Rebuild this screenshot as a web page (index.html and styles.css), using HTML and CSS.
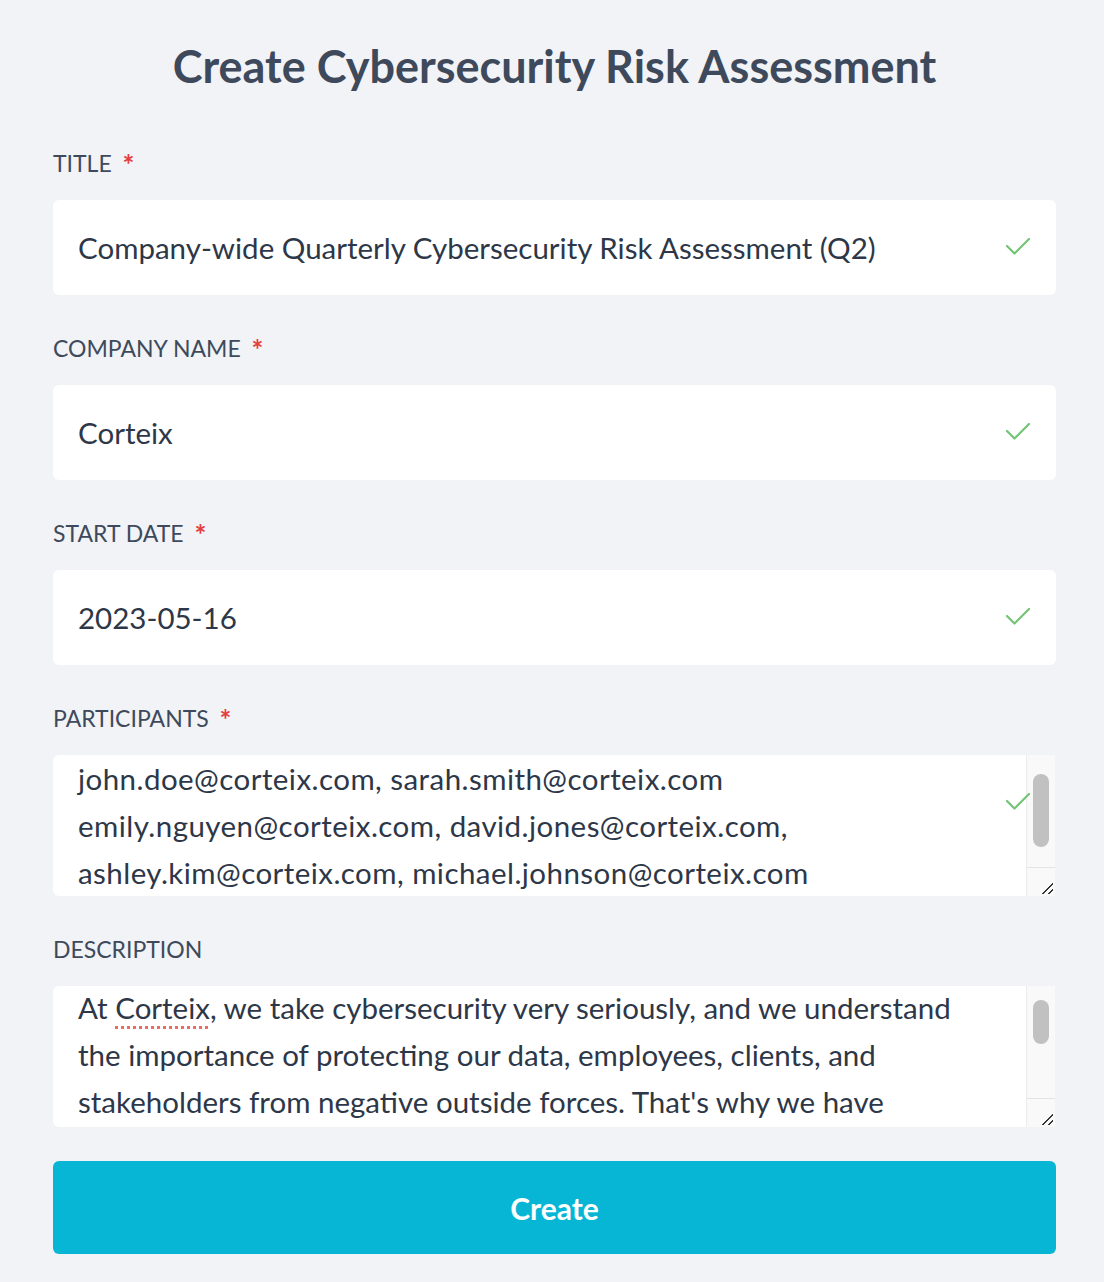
FILE: index.html
```html
<!DOCTYPE html>
<html lang="en">
<head>
  <meta charset="UTF-8">
  <title>Create Cybersecurity Risk Assessment</title>
  <meta name="viewport" content="width=device-width, initial-scale=1.0">
  <link rel="stylesheet" href="styles.css">
</head>
<body>
  <main class="page">
    <h1 class="page-title">Create Cybersecurity Risk Assessment</h1>

    <form class="form">
      <div class="field">
        <label class="field-label" for="title">Title <span class="req">*</span></label>
        <div class="control">
          <input class="input" id="title" type="text" value="Company-wide Quarterly Cybersecurity Risk Assessment (Q2)">
          <svg class="check" viewBox="0 0 24 17"><polyline points="1,8 8.5,15.5 23,1"/></svg>
        </div>
      </div>

      <div class="field">
        <label class="field-label" for="company">Company name <span class="req">*</span></label>
        <div class="control">
          <input class="input" id="company" type="text" value="Corteix">
          <svg class="check" viewBox="0 0 24 17"><polyline points="1,8 8.5,15.5 23,1"/></svg>
        </div>
      </div>

      <div class="field">
        <label class="field-label" for="start">Start date <span class="req">*</span></label>
        <div class="control">
          <input class="input" id="start" type="text" value="2023-05-16">
          <svg class="check" viewBox="0 0 24 17"><polyline points="1,8 8.5,15.5 23,1"/></svg>
        </div>
      </div>

      <div class="field">
        <label class="field-label" for="participants">Participants <span class="req">*</span></label>
        <div class="control">
          <div class="textarea participants" id="participants">
            <div class="textarea-text">john.doe@corteix.com, sarah.smith@corteix.com<br>emily.nguyen@corteix.com, david.jones@corteix.com,<br>ashley.kim@corteix.com, michael.johnson@corteix.com</div>
            <div class="scrollbar">
              <div class="scroll-track"><span class="scroll-thumb"></span></div>
              <div class="resizer"></div>
            </div>
          </div>
          <svg class="check" viewBox="0 0 24 17"><polyline points="1,8 8.5,15.5 23,1"/></svg>
        </div>
      </div>

      <div class="field">
        <label class="field-label" for="description">Description</label>
        <div class="control">
          <div class="textarea description" id="description">
            <div class="textarea-text">At <span class="typo">Corteix</span>, we take cybersecurity very seriously, and we understand<br>the importance of protecting our data, employees, clients, and<br>stakeholders from negative outside forces. That's why we have</div>
            <div class="scrollbar">
              <div class="scroll-track"><span class="scroll-thumb"></span></div>
              <div class="resizer"></div>
            </div>
          </div>
        </div>
      </div>

      <button class="btn" type="button">Create</button>
    </form>
  </main>
</body>
</html>
```

FILE: styles.css
```css
:root {
  --bg: #f1f3f7;
  --heading: #3e4a5b;
  --text: #2d3748;
  --required: #e53e3e;
  --valid: #74c476;
  --primary: #06b6d4;
}

body {
  margin: 0;
  background: var(--bg);
  font-family: Lato, 'Noto Sans', sans-serif;
  color: var(--text);
}

.page {
  padding: 24px 48px 28px 53px;
}

.page-title {
  margin: 0 0 40px;
  text-align: center;
  font-size: 45px;
  line-height: 84px;
  font-weight: 700;
  color: var(--heading);
}

.field {
  margin-bottom: 38px;
}

.field-label {
  display: block;
  margin-bottom: 22px;
  font-size: 23px;
  line-height: 30px;
  text-transform: uppercase;
  color: var(--heading);
}

.req {
  display: inline-block;
  margin-left: 5px;
  font-size: 28px;
  font-weight: 700;
  line-height: 20px;
  vertical-align: -3px;
  color: var(--required);
}

.control {
  position: relative;
}

.input {
  display: block;
  width: 100%;
  height: 95px;
  box-sizing: border-box;
  padding: 0 70px 0 25px;
  border: none;
  border-radius: 6px;
  background: #fff;
  font-family: inherit;
  font-size: 29.5px;
  color: var(--text);
  outline: none;
}

.check {
  position: absolute;
  right: 26px;
  top: 38px;
  width: 24px;
  height: 17px;
  fill: none;
  stroke: var(--valid);
  stroke-width: 2.2;
  stroke-linecap: round;
  stroke-linejoin: round;
}

.textarea {
  display: flex;
  height: 141px;
  margin-right: 1px;
  background: #fff;
  border-radius: 6px 0 0 6px;
  overflow: hidden;
}

.textarea-text {
  flex: 1;
  overflow: hidden;
  padding: 0 30px 0 25px;
  font-size: 29.5px;
  line-height: 47px;
  white-space: nowrap;
}

.participants .textarea-text {
  letter-spacing: 0.45px;
}

.description .textarea-text {
  margin-top: -2px;
}

.typo {
  text-decoration: underline dotted #ee6b5f;
  text-decoration-thickness: 3px;
  text-underline-offset: 7px;
}

.scrollbar {
  display: flex;
  flex-direction: column;
  width: 28px;
  background: #f9f9f9;
  border-left: 1px solid #ececec;
}

.scroll-track {
  flex: 1;
  padding: 19px 6px 0;
}

.scroll-thumb {
  display: block;
  height: 73px;
  border-radius: 8px;
  background: #c1c1c1;
}

.description .scroll-track {
  padding-top: 14px;
}

.description .scroll-thumb {
  height: 44px;
}

.resizer {
  height: 28px;
  border-top: 1px solid #e4e4e4;
  background: linear-gradient(135deg, transparent 0 58%, #333 58% 65%, transparent 65% 80%, #333 80% 87%, transparent 87%) right 2px bottom 2px / 14px 14px no-repeat;
}

.btn {
  display: block;
  width: 100%;
  height: 93px;
  margin-top: -4px;
  border: none;
  border-radius: 6px;
  background: var(--primary);
  color: #fff;
  font-family: inherit;
  font-size: 30px;
  font-weight: 700;
  cursor: pointer;
}
```
